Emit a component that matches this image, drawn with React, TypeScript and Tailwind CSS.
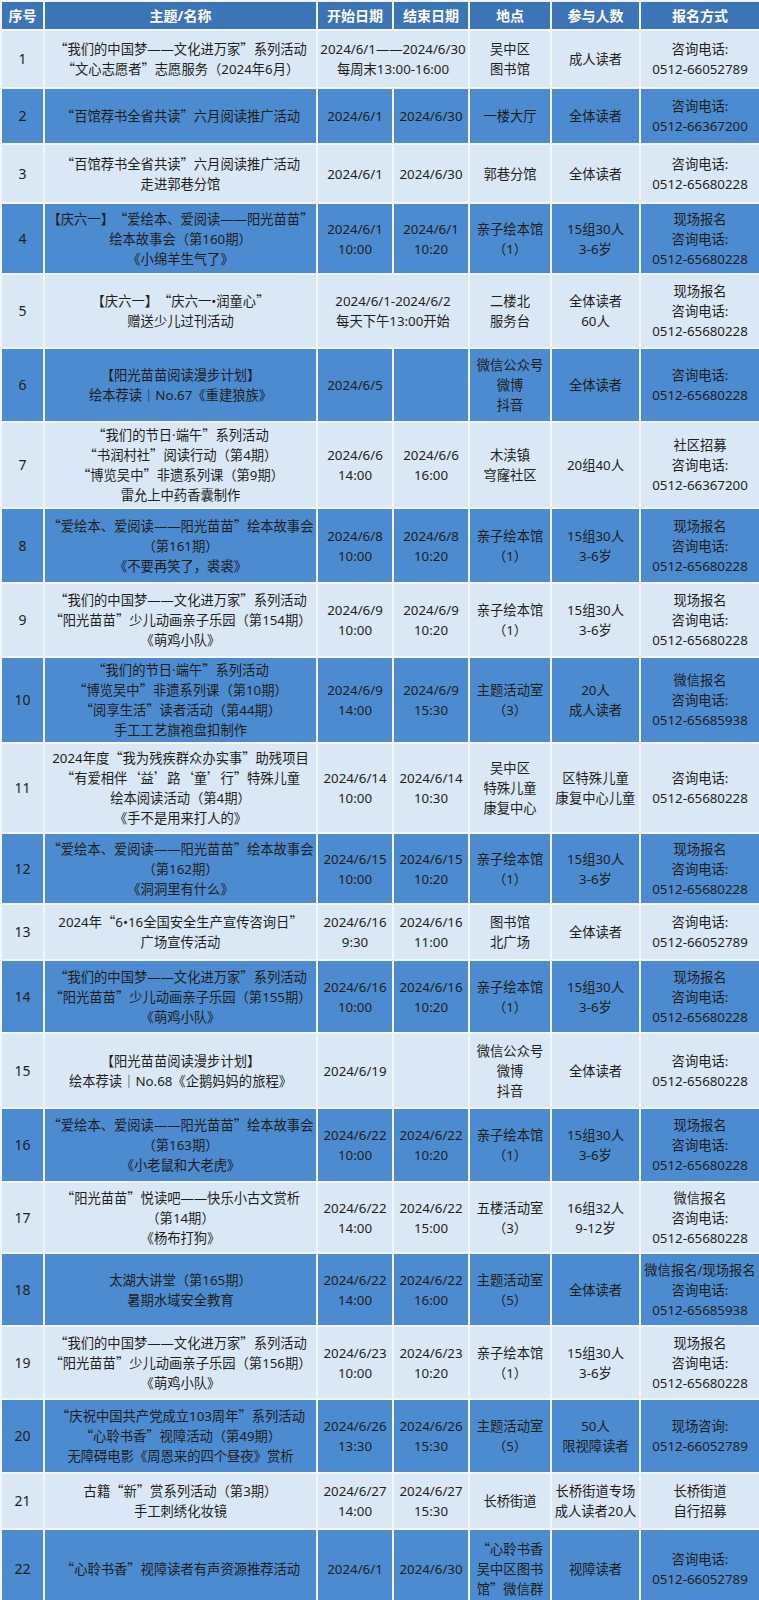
import React from "react";

type Cell = { t: string[]; span?: number };
type Row = { n: string; h: string; cells: Cell[] };

const L = (...t: string[]): Cell => ({ t });

const rows: Row[] = [
  { n: "1", h: "h-[58px]", cells: [L("“我们的中国梦——文化进万家”系列活动", "“文心志愿者”志愿服务（2024年6月）"), { t: ["2024/6/1——2024/6/30", "每周末13:00-16:00"], span: 2 }, L("吴中区", "图书馆"), L("成人读者"), L("咨询电话:", "0512-66052789")] },
  { n: "2", h: "h-[56px]", cells: [L("“百馆荐书全省共读”六月阅读推广活动"), L("2024/6/1"), L("2024/6/30"), L("一楼大厅"), L("全体读者"), L("咨询电话:", "0512-66367200")] },
  { n: "3", h: "h-[59px]", cells: [L("“百馆荐书全省共读”六月阅读推广活动", "走进郭巷分馆"), L("2024/6/1"), L("2024/6/30"), L("郭巷分馆"), L("全体读者"), L("咨询电话:", "0512-65680228")] },
  { n: "4", h: "h-[71px]", cells: [L("【庆六一】“爱绘本、爱阅读——阳光苗苗”", "绘本故事会（第160期）", "《小绵羊生气了》"), L("2024/6/1", "10:00"), L("2024/6/1", "10:20"), L("亲子绘本馆", "（1）"), L("15组30人", "3-6岁"), L("现场报名", "咨询电话:", "0512-65680228")] },
  { n: "5", h: "h-[74px]", cells: [L("【庆六一】“庆六一•润童心”", "赠送少儿过刊活动"), { t: ["2024/6/1-2024/6/2", "每天下午13:00开始"], span: 2 }, L("二楼北", "服务台"), L("全体读者", "60人"), L("现场报名", "咨询电话:", "0512-65680228")] },
  { n: "6", h: "h-[74px]", cells: [L("【阳光苗苗阅读漫步计划】", "绘本荐读｜No.67《重建狼族》"), L("2024/6/5"), L(""), L("微信公众号", "微博", "抖音"), L("全体读者"), L("咨询电话:", "0512-65680228")] },
  { n: "7", h: "h-[86px]", cells: [L("“我们的节日·端午”系列活动", "“书润村社”阅读行动（第4期）", "“博览吴中”非遗系列课（第9期）", "雷允上中药香囊制作"), L("2024/6/6", "14:00"), L("2024/6/6", "16:00"), L("木渎镇", "穹窿社区"), L("20组40人"), L("社区招募", "咨询电话:", "0512-66367200")] },
  { n: "8", h: "h-[75px]", cells: [L("“爱绘本、爱阅读——阳光苗苗”绘本故事会", "（第161期）", "《不要再笑了，裘裘》"), L("2024/6/8", "10:00"), L("2024/6/8", "10:20"), L("亲子绘本馆", "（1）"), L("15组30人", "3-6岁"), L("现场报名", "咨询电话:", "0512-65680228")] },
  { n: "9", h: "h-[74px]", cells: [L("“我们的中国梦——文化进万家”系列活动", "“阳光苗苗”少儿动画亲子乐园（第154期）", "《萌鸡小队》"), L("2024/6/9", "10:00"), L("2024/6/9", "10:20"), L("亲子绘本馆", "（1）"), L("15组30人", "3-6岁"), L("现场报名", "咨询电话:", "0512-65680228")] },
  { n: "10", h: "h-[86px]", cells: [L("“我们的节日·端午”系列活动", "“博览吴中”非遗系列课（第10期）", "“阅享生活”读者活动（第44期）", "手工工艺旗袍盘扣制作"), L("2024/6/9", "14:00"), L("2024/6/9", "15:30"), L("主题活动室", "（3）"), L("20人", "成人读者"), L("微信报名", "咨询电话:", "0512-65685938")] },
  { n: "11", h: "h-[90px]", cells: [L("2024年度“我为残疾群众办实事”助残项目", "“有爱相伴‘益’路‘童’行”特殊儿童", "绘本阅读活动（第4期）", "《手不是用来打人的》"), L("2024/6/14", "10:00"), L("2024/6/14", "10:30"), L("吴中区", "特殊儿童", "康复中心"), L("区特殊儿童", "康复中心儿童"), L("咨询电话:", "0512-65680228")] },
  { n: "12", h: "h-[71px]", cells: [L("“爱绘本、爱阅读——阳光苗苗”绘本故事会", "（第162期）", "《洞洞里有什么》"), L("2024/6/15", "10:00"), L("2024/6/15", "10:20"), L("亲子绘本馆", "（1）"), L("15组30人", "3-6岁"), L("现场报名", "咨询电话:", "0512-65680228")] },
  { n: "13", h: "h-[56px]", cells: [L("2024年“6•16全国安全生产宣传咨询日”", "广场宣传活动"), L("2024/6/16", "9:30"), L("2024/6/16", "11:00"), L("图书馆", "北广场"), L("全体读者"), L("咨询电话:", "0512-66052789")] },
  { n: "14", h: "h-[73px]", cells: [L("“我们的中国梦——文化进万家”系列活动", "“阳光苗苗”少儿动画亲子乐园（第155期）", "《萌鸡小队》"), L("2024/6/16", "10:00"), L("2024/6/16", "10:20"), L("亲子绘本馆", "（1）"), L("15组30人", "3-6岁"), L("现场报名", "咨询电话:", "0512-65680228")] },
  { n: "15", h: "h-[75px]", cells: [L("【阳光苗苗阅读漫步计划】", "绘本荐读｜No.68《企鹅妈妈的旅程》"), L("2024/6/19"), L(""), L("微信公众号", "微博", "抖音"), L("全体读者"), L("咨询电话:", "0512-65680228")] },
  { n: "16", h: "h-[74px]", cells: [L("“爱绘本、爱阅读——阳光苗苗”绘本故事会", "（第163期）", "《小老鼠和大老虎》"), L("2024/6/22", "10:00"), L("2024/6/22", "10:20"), L("亲子绘本馆", "（1）"), L("15组30人", "3-6岁"), L("现场报名", "咨询电话:", "0512-65680228")] },
  { n: "17", h: "h-[71px]", cells: [L("“阳光苗苗”悦读吧——快乐小古文赏析", "（第14期）", "《杨布打狗》"), L("2024/6/22", "14:00"), L("2024/6/22", "15:00"), L("五楼活动室", "（3）"), L("16组32人", "9-12岁"), L("微信报名", "咨询电话:", "0512-65680228")] },
  { n: "18", h: "h-[73px]", cells: [L("太湖大讲堂（第165期）", "暑期水域安全教育"), L("2024/6/22", "14:00"), L("2024/6/22", "16:00"), L("主题活动室", "（5）"), L("全体读者"), L("微信报名/现场报名", "咨询电话:", "0512-65685938")] },
  { n: "19", h: "h-[73px]", cells: [L("“我们的中国梦——文化进万家”系列活动", "“阳光苗苗”少儿动画亲子乐园（第156期）", "《萌鸡小队》"), L("2024/6/23", "10:00"), L("2024/6/23", "10:20"), L("亲子绘本馆", "（1）"), L("15组30人", "3-6岁"), L("现场报名", "咨询电话:", "0512-65680228")] },
  { n: "20", h: "h-[74px]", cells: [L("“庆祝中国共产党成立103周年”系列活动", "“心聆书香”视障活动（第49期）", "无障碍电影《周恩来的四个昼夜》赏析"), L("2024/6/26", "13:30"), L("2024/6/26", "15:30"), L("主题活动室", "（5）"), L("50人", "限视障读者"), L("现场咨询:", "0512-66052789")] },
  { n: "21", h: "h-[56px]", cells: [L("古籍“新”赏系列活动（第3期）", "手工刺绣化妆镜"), L("2024/6/27", "14:00"), L("2024/6/27", "15:30"), L("长桥街道"), L("长桥街道专场", "成人读者20人"), L("长桥街道", "自行招募")] },
  { n: "22", h: "h-[80px]", cells: [L("“心聆书香”视障读者有声资源推荐活动"), L("2024/6/1"), L("2024/6/30"), L("“心聆书香", "吴中区图书", "馆”微信群"), L("视障读者"), L("咨询电话:", "0512-66052789")] },
];

const headers = ["序号", "主题/名称", "开始日期", "结束日期", "地点", "参与人数", "报名方式"];

function Line({ s }: { s: string }) {
  const parts: React.ReactNode[] = [];
  let buf = "";
  let k = 0;
  for (const ch of Array.from(s)) {
    if (ch === "“" || ch === "‘") {
      if (buf) parts.push(<span key={k++}>{buf}</span>);
      buf = "";
      parts.push(
        <span key={k++} className="inline-block w-[1em] text-right font-['Noto_Sans_CJK_SC',sans-serif]">
          {ch}
        </span>
      );
    } else if (ch === "”" || ch === "’") {
      if (buf) parts.push(<span key={k++}>{buf}</span>);
      buf = "";
      parts.push(
        <span key={k++} className="inline-block w-[1em] text-left font-['Noto_Sans_CJK_SC',sans-serif]">
          {ch}
        </span>
      );
    } else {
      buf += ch;
    }
  }
  if (buf) parts.push(<span key={k++}>{buf}</span>);
  return <div className="h-[20px]">{parts}</div>;
}

export default function App() {
  return (
    <div className="w-[759px] h-[1600px] overflow-hidden bg-[#f4f7fb] font-['Noto_Sans','Noto_Sans_CJK_SC',sans-serif]">
      <table className="w-[759px] table-fixed border-collapse">
        <colgroup>
          <col className="w-[43px]" />
          <col className="w-[273px]" />
          <col className="w-[76px]" />
          <col className="w-[76px]" />
          <col className="w-[82px]" />
          <col className="w-[89px]" />
          <col className="w-[120px]" />
        </colgroup>
        <thead>
          <tr className="h-[29px] bg-[#3c74b8]">
            {headers.map((h) => (
              <th key={h} className="border-2 border-[#f2f6fb] p-0 text-center align-middle text-[14px] leading-[20px] font-bold text-white">
                {h}
              </th>
            ))}
          </tr>
        </thead>
        <tbody>
          {rows.map((r, i) => (
            <tr key={r.n} className={`${r.h} ${i % 2 === 0 ? "bg-[#dae7f4]" : "bg-[#4c8bd0]"}`}>
              <td className="border-2 border-[#f2f6fb] p-0 text-center align-middle text-[14px] leading-[20px] text-[#1e1e1e]">{r.n}</td>
              {r.cells.map((c, j) => (
                <td
                  key={j}
                  colSpan={c.span}
                  className="border-2 border-[#f2f6fb] p-0 text-center align-middle text-[13.3px] leading-[20px] text-[#1e1e1e] whitespace-nowrap overflow-hidden"
                >
                  {c.t.map((line, k) => (
                    <Line key={k} s={line} />
                  ))}
                </td>
              ))}
            </tr>
          ))}
        </tbody>
      </table>
    </div>
  );
}
